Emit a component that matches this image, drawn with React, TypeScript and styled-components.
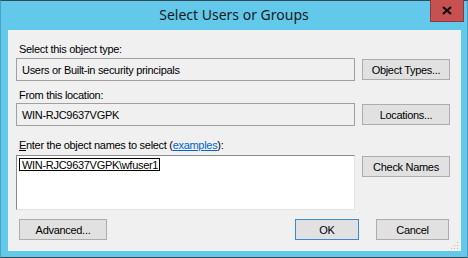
import React from 'react';
import styled, { createGlobalStyle } from 'styled-components';

const GlobalStyle = createGlobalStyle`
  html, body {
    margin: 0;
    padding: 0;
    background: #ffffff;
  }
  * {
    box-sizing: border-box;
  }
`;

const Window = styled.div`
  width: 468px;
  height: 258px;
  display: flex;
  flex-direction: column;
  background: #62c9ea;
  border: 1px solid #4aa3c6;
  border-top-color: #3b4750;
  border-bottom-color: #3b4750;
  position: relative;
  font-family: 'Liberation Sans', Arial, sans-serif;
  font-size: 11px;
  letter-spacing: -0.3px;
  color: #000;
`;

const TitleBar = styled.div`
  height: 29px;
  display: flex;
  align-items: center;
  justify-content: center;
  padding-bottom: 2px;
  font-family: 'Noto Sans', 'Open Sans', sans-serif;
  font-size: 14px;
  letter-spacing: 0;
  color: #1b1b1b;
`;

const CloseButton = styled.div`
  position: absolute;
  top: -1px;
  right: 3px;
  width: 34px;
  height: 22px;
  background: #c75050;
  border: 1px solid #8f3a3a;
  border-top: none;
  display: flex;
  align-items: center;
  justify-content: center;
`;

const Client = styled.div`
  flex: 1;
  margin: 0 6px 6px 7px;
  background: #f0f0f0;
  display: flex;
  flex-direction: column;
  padding: 12px 11px 0 8px;
  position: relative;
`;

const Label = styled.div<{ $before: number; $after: number }>`
  height: 13px;
  line-height: 13px;
  padding-left: 3px;
  margin-top: ${p => p.$before}px;
  margin-bottom: ${p => p.$after}px;
  white-space: nowrap;
`;

const Mnemonic = styled.span`
  text-decoration: underline;
`;

const Link = styled.span`
  color: #0066cc;
  text-decoration: underline;
`;

const Row = styled.div<{ $align?: string }>`
  display: flex;
  align-items: ${p => p.$align || 'center'};
  gap: 7px;
`;

const ReadOnlyBox = styled.div`
  width: 339px;
  height: 23px;
  border: 1px solid #a0a0a0;
  background: #f0f0f0;
  padding-left: 5px;
  display: flex;
  align-items: center;
  white-space: nowrap;
`;

const NamesBox = styled.div`
  width: 339px;
  height: 55px;
  background: #ffffff;
  border: 1px solid #e3e3e3;
  border-top-color: #8a8a8a;
  border-left-color: #8a8a8a;
  padding: 2px 0 0 2px;
`;

const TypedText = styled.span`
  display: inline-block;
  height: 13px;
  line-height: 12px;
  padding: 0 1px 0 2px;
  border: 1px solid #000;
  white-space: nowrap;
`;

const Button = styled.div<{ $width?: number; $default?: boolean; $top?: number }>`
  width: ${p => p.$width || 88}px;
  height: 21px;
  margin-top: ${p => p.$top || 0}px;
  background: #e1e1e1;
  border: 1px solid ${p => (p.$default ? '#3c8ad0' : '#adadad')};
  display: flex;
  align-items: center;
  justify-content: center;
  white-space: nowrap;
  flex-shrink: 0;
`;

const Footer = styled.div`
  display: flex;
  align-items: center;
  margin-top: 9px;
  padding: 0 1px 0 3px;
`;

const Spacer = styled.div`
  flex: 1;
`;

const ButtonPair = styled.div`
  display: flex;
  gap: 17px;
`;

const Grip = styled.svg`
  position: absolute;
  right: 2px;
  bottom: 1px;
`;

export default function App() {
  return (
    <>
      <GlobalStyle />
      <Window>
        <TitleBar>Select Users or Groups</TitleBar>
        <CloseButton>
          <svg width="10" height="9" viewBox="0 0 10 9">
            <path d="M1 1 L9 8 M9 1 L1 8" stroke="#111" strokeWidth="2.2" />
          </svg>
        </CloseButton>
        <Client>
          <Label $before={1} $after={2}>Select this object type:</Label>
          <Row>
            <ReadOnlyBox>Users or Built-in security principals</ReadOnlyBox>
            <Button>Object Types...</Button>
          </Row>
          <Label $before={8} $after={1}>From this location:</Label>
          <Row>
            <ReadOnlyBox>WIN-RJC9637VGPK</ReadOnlyBox>
            <Button>Locations...</Button>
          </Row>
          <Label $before={13} $after={3}>
            <Mnemonic>E</Mnemonic>nter the object names to select (<Link>examples</Link>):
          </Label>
          <Row $align="flex-start">
            <NamesBox>
              <TypedText>WIN-RJC9637VGPK\wfuser1</TypedText>
            </NamesBox>
            <Button $top={1}>Check Names</Button>
          </Row>
          <Footer>
            <Button>Advanced...</Button>
            <Spacer />
            <ButtonPair>
              <Button $width={64} $default>OK</Button>
              <Button $width={73}>Cancel</Button>
            </ButtonPair>
          </Footer>
          <Grip width="8" height="8" viewBox="0 0 8 8">
            <g fill="#b8b8b8">
              <rect x="6" y="0" width="1" height="1" />
              <rect x="3" y="3" width="1" height="1" />
              <rect x="6" y="3" width="1" height="1" />
              <rect x="0" y="6" width="1" height="1" />
              <rect x="3" y="6" width="1" height="1" />
              <rect x="6" y="6" width="1" height="1" />
            </g>
          </Grip>
        </Client>
      </Window>
    </>
  );
}
